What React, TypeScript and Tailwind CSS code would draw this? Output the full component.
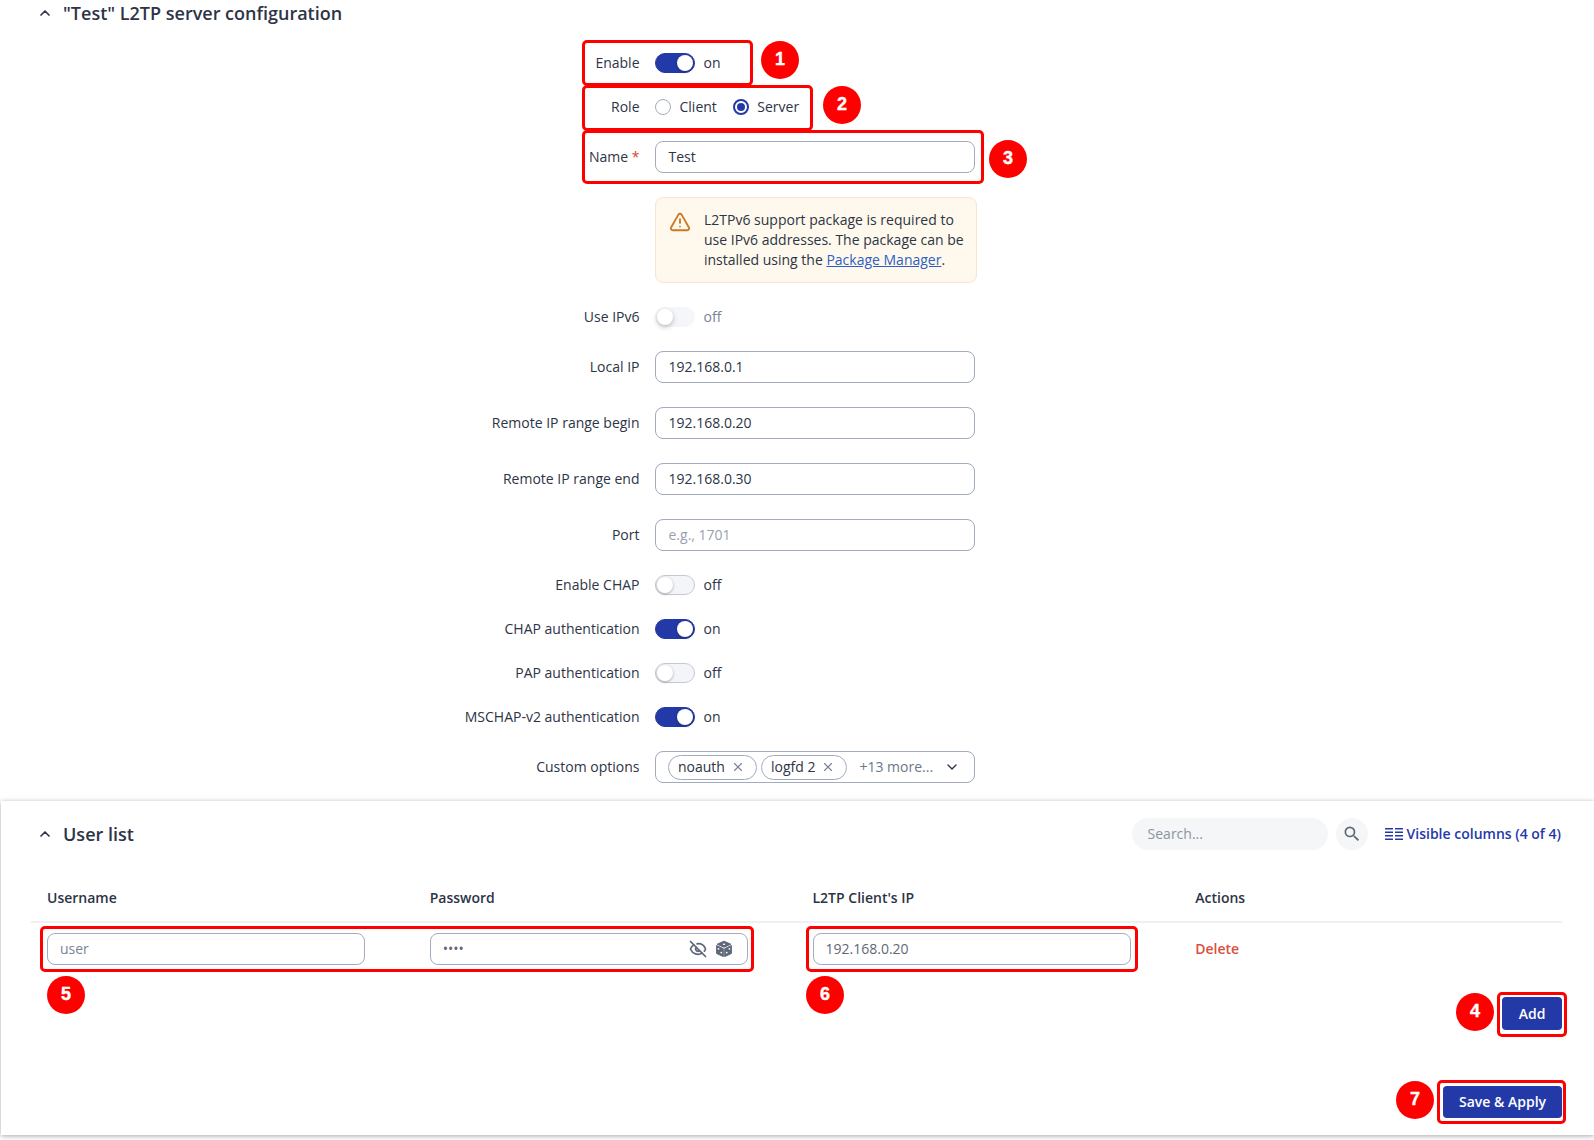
import { ChevronDown, ChevronUp, EyeOff, TriangleAlert, X } from 'lucide-react';
import type { ReactNode } from 'react';

function Toggle({ on, label, disabled }: { on: boolean; label: string; disabled?: boolean }) {
  return (
    <div className="flex items-center gap-[8.5px]">
      <div
        className={`flex h-5 w-10 items-center rounded-full border p-px ${
          on
            ? 'justify-end border-[#2439a8] bg-[#2439a8]'
            : disabled
              ? 'border-transparent bg-[#f5f6f9]'
              : 'border-[#c4c9d6] bg-[#f4f5f8]'
        }`}
      >
        <div
          className={`h-4 w-4 rounded-full bg-white ${
            disabled ? 'shadow-[0_2px_5px_rgba(0,0,0,0.25)]' : 'shadow-[0_1px_3px_rgba(0,0,0,0.3)]'
          }`}
        />
      </div>
      <span className={disabled ? 'text-[#7a8496]' : ''}>{label}</span>
    </div>
  );
}

function Field({ value, placeholder }: { value?: string; placeholder?: string }) {
  return (
    <div className="flex h-8 w-[320px] items-center rounded-lg border border-[#a3abbe] px-[12.5px]">
      {value ? <span>{value}</span> : <span className="text-[#98a0b0]">{placeholder}</span>}
    </div>
  );
}

function Row({ label, children }: { label: ReactNode; children: ReactNode }) {
  return (
    <div className="flex items-center gap-[15.5px]">
      <div className="w-[639.5px] text-right">{label}</div>
      {children}
    </div>
  );
}

function Radio({ checked, label }: { checked?: boolean; label: string }) {
  return (
    <div className="flex items-center gap-[8.5px]">
      <div
        className={`flex h-4 w-4 items-center justify-center rounded-full border ${
          checked ? 'border-2 border-[#2439a8]' : 'border-[#a3abbe]'
        }`}
      >
        {checked && <div className="h-2 w-2 rounded-full bg-[#2439a8]" />}
      </div>
      <span>{label}</span>
    </div>
  );
}

function Chip({ label }: { label: string }) {
  return (
    <div className="flex h-[25px] items-center gap-1.5 rounded-full border border-[#a3abbe] pl-[9px] pr-[11px]">
      <span>{label}</span>
      <X size={14} className="text-[#7d8698]" />
    </div>
  );
}

function Dice() {
  return (
    <svg width="18" height="18" viewBox="0 0 18 18" strokeLinejoin="round">
      <path d="M9 1.2 15.8 4.2 9 7.2 2.2 4.2z" fill="#5f6878" stroke="#5f6878" />
      <path d="M1.6 5.6 8.3 8.7V16.6L1.6 13.5z" fill="#5f6878" stroke="#5f6878" />
      <path d="M16.4 5.6 9.7 8.7V16.6L16.4 13.5z" fill="#5f6878" stroke="#5f6878" />
      <ellipse cx="9" cy="4.2" rx="1.3" ry="0.8" fill="#fff" />
      <circle cx="3.5" cy="8.8" r="0.9" fill="#fff" />
      <circle cx="6.3" cy="12.6" r="0.9" fill="#fff" />
      <circle cx="14.4" cy="8.8" r="0.9" fill="#fff" />
      <circle cx="11.7" cy="12.6" r="0.9" fill="#fff" />
    </svg>
  );
}

function Mark({ className }: { className: string }) {
  return <div className={`absolute rounded-[5px] border-[3px] border-[#ff0000] ${className}`} />;
}

function Badge({ n, className }: { n: number; className: string }) {
  return (
    <div
      className={`absolute flex h-[38px] w-[38px] items-center justify-center rounded-full bg-[#ff0000] font-['Liberation_Sans',sans-serif] text-[18px] font-bold text-white [-webkit-text-stroke:0.4px_white] ${className}`}
    >
      {n}
    </div>
  );
}

export default function App() {
  return (
    <div className="relative h-[1140px] overflow-hidden bg-white font-['Open_Sans',sans-serif] text-sm text-[#2d3446]">
      <div className="flex h-[26px] items-center gap-[10px] pl-[37px] text-[18px] font-semibold leading-[26px]">
        <ChevronUp size={16} strokeWidth={2.5} />
        <span>"Test" L2TP server configuration</span>
      </div>

      <div className="mt-[27px] flex flex-col gap-6">
        <Row label="Enable">
          <Toggle on label="on" />
        </Row>
        <Row label="Role">
          <div className="flex items-center gap-4">
            <Radio label="Client" />
            <Radio checked label="Server" />
          </div>
        </Row>
        <Row
          label={
            <>
              Name <span className="text-[#d9442f]">*</span>
            </>
          }
        >
          <Field value="Test" />
        </Row>
        <div className="ml-[655px] flex h-[86px] w-[322px] gap-[13px] rounded-lg border border-[#f8e6cb] bg-[#fef9ec] pl-[13px] pr-2 pt-3 leading-5">
          <TriangleAlert size={22} className="mt-px shrink-0 text-[#cc7722]" />
          <p>
            L2TPv6 support package is required to use IPv6 addresses. The package can be installed using the{' '}
            <span className="text-[#2f5fc4] underline">Package Manager</span>.
          </p>
        </div>
        <Row label="Use IPv6">
          <Toggle on={false} label="off" disabled />
        </Row>
        <Row label="Local IP">
          <Field value="192.168.0.1" />
        </Row>
        <Row label="Remote IP range begin">
          <Field value="192.168.0.20" />
        </Row>
        <Row label="Remote IP range end">
          <Field value="192.168.0.30" />
        </Row>
        <Row label="Port">
          <Field placeholder="e.g., 1701" />
        </Row>
        <Row label="Enable CHAP">
          <Toggle on={false} label="off" />
        </Row>
        <Row label="CHAP authentication">
          <Toggle on label="on" />
        </Row>
        <Row label="PAP authentication">
          <Toggle on={false} label="off" />
        </Row>
        <Row label="MSCHAP-v2 authentication">
          <Toggle on label="on" />
        </Row>
        <Row label="Custom options">
          <div className="flex h-8 w-[320px] items-center rounded-lg border border-[#a3abbe] pl-3 pr-3.5">
            <div className="flex items-center gap-[4px]">
              <Chip label="noauth" />
              <Chip label="logfd 2" />
            </div>
            <span className="ml-3 text-[#6d7689]">+13 more...</span>
            <ChevronDown size={16} className="ml-auto" />
          </div>
        </Row>
      </div>

      <div className="ml-px mt-[18px] h-[334px] bg-white pt-[17px] shadow-[0_1px_5px_rgba(0,0,0,0.35)]">
        <div className="flex h-8 items-center pl-[36px] pr-[33px]">
          <ChevronUp size={16} strokeWidth={2.5} />
          <span className="ml-[10px] mt-0.5 text-[18px] font-semibold">User list</span>
          <div className="ml-auto flex h-8 w-[196px] items-center rounded-full bg-[#f5f6f8] px-4 text-[#8a93a3]">
            Search...
          </div>
          <div className="ml-2 flex h-8 w-8 items-center justify-center rounded-full bg-[#f5f6f8]">
            <svg width="20" height="20" viewBox="0 0 24 24" fill="#5f6878">
              <path d="M15.5 14h-.79l-.28-.27A6.471 6.471 0 0 0 16 9.5 6.5 6.5 0 1 0 9.5 16c1.61 0 3.09-.59 4.23-1.57l.27.28v.79l5 4.99L20.49 19l-4.99-5zm-6 0C7.01 14 5 11.99 5 9.5S7.01 5 9.5 5 14 7.01 14 9.5 11.99 14 9.5 14z" />
            </svg>
          </div>
          <div className="ml-[17px] flex items-center gap-1 font-semibold text-[#2439a8]">
            <svg width="18" height="12" viewBox="0 0 18 12" fill="#2439a8">
              <path d="M0 0h8v1.5H0zM0 3.5h8V5H0zM0 7h8v1.5H0zM0 10.5h8V12H0zM10 0h8v1.5h-8zM10 3.5h8V5h-8zM10 7h8v1.5h-8zM10 10.5h8V12h-8z" />
            </svg>
            <span>Visible columns (4 of 4)</span>
          </div>
        </div>

        <div className="ml-[30px] mr-[32px] mt-[19px]">
          <div className="grid h-[54px] grid-cols-4 items-center border-b-2 border-[#eef0f4] pt-[5px] font-semibold">
            <div className="pl-4">Username</div>
            <div className="pl-4">Password</div>
            <div className="pl-4">L2TP Client's IP</div>
            <div className="pl-4">Actions</div>
          </div>
          <div className="grid grid-cols-4 items-center pt-2.5">
            <div className="pl-4">
              <div className="flex h-8 w-[318px] items-center rounded-lg border border-[#a3abbe] px-3 text-[#7a8496]">
                user
              </div>
            </div>
            <div className="pl-4">
              <div className="flex h-8 w-[318px] items-center rounded-lg border border-[#a3abbe] pl-3 pr-3.5">
                <span className="text-[#5f6878]">••••</span>
                <EyeOff size={18} strokeWidth={2.3} className="ml-auto text-[#5f6878]" />
                <div className="ml-2">
                  <Dice />
                </div>
              </div>
            </div>
            <div className="pl-4">
              <div className="flex h-8 w-[318px] items-center rounded-lg border border-[#a3abbe] px-3 text-[#5f6878]">
                192.168.0.20
              </div>
            </div>
            <div className="pl-4 font-semibold text-[#d9503f]">Delete</div>
          </div>
          <div className="mt-8 flex justify-end">
            <div className="flex h-[33px] w-[60px] items-center justify-center rounded bg-[#2439a8] font-semibold text-white">
              Add
            </div>
          </div>
          <div className="mt-14 flex justify-end">
            <div className="flex h-8 w-[119px] items-center justify-center rounded bg-[#2439a8] font-semibold text-white">
              Save &amp; Apply
            </div>
          </div>
        </div>
      </div>

      {/* annotations drawn over the page */}
      <Mark className="left-[582px] top-[40px] h-[46px] w-[171px]" />
      <Mark className="left-[582px] top-[85px] h-[46px] w-[231px]" />
      <Mark className="left-[582px] top-[130px] h-[54px] w-[402px]" />
      <Mark className="left-[40px] top-[926px] h-[46px] w-[714px]" />
      <Mark className="left-[806px] top-[926px] h-[46px] w-[332px]" />
      <Mark className="left-[1497px] top-[992px] h-[45px] w-[70px]" />
      <Mark className="left-[1437px] top-[1080px] h-[44px] w-[129px]" />
      <Badge n={1} className="left-[761px] top-[41px]" />
      <Badge n={2} className="left-[823px] top-[86px]" />
      <Badge n={3} className="left-[989px] top-[140px]" />
      <Badge n={4} className="left-[1456px] top-[993px]" />
      <Badge n={5} className="left-[47px] top-[976px]" />
      <Badge n={6} className="left-[806px] top-[976px]" />
      <Badge n={7} className="left-[1396px] top-[1081px]" />
    </div>
  );
}
